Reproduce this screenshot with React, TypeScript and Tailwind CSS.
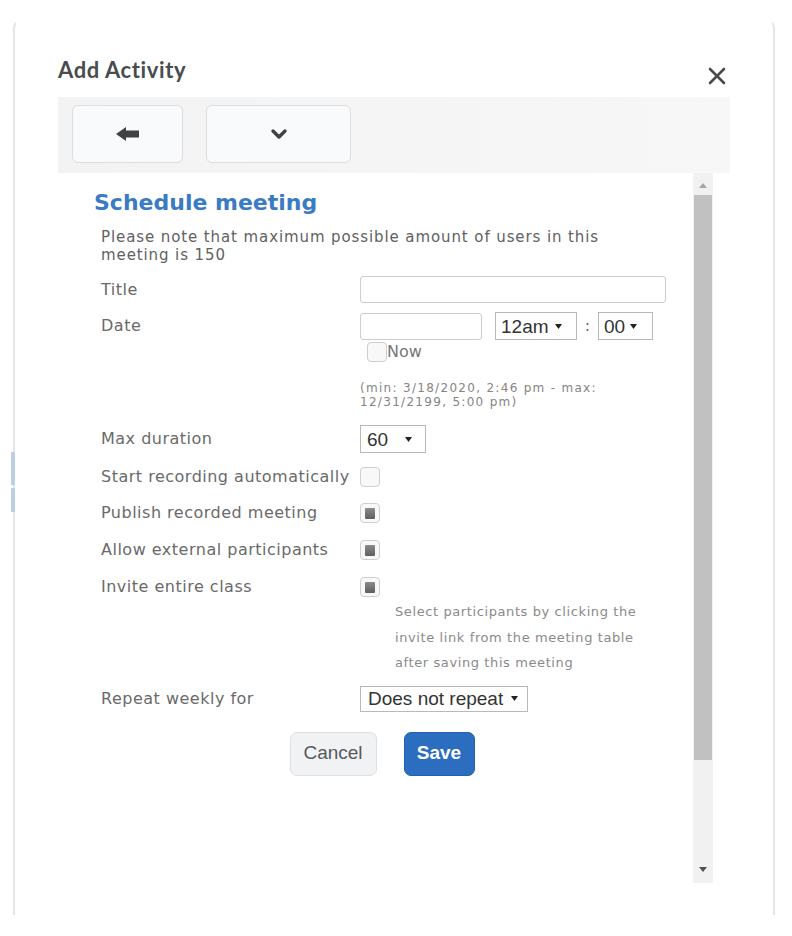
import React from "react";

function Arrow({ className = "" }: { className?: string }) {
  return (
    <svg width="7" height="5" viewBox="0 0 7 5" className={className}>
      <polygon points="0,0 7,0 3.5,5" fill="#222" />
    </svg>
  );
}

function Select({ value, className, textClass = "" }: { value: string; className: string; textClass?: string }) {
  return (
    <div
      className={`flex items-center justify-between border border-[#b9b9b9] bg-white font-['Liberation_Sans',sans-serif] text-[19px] text-[#333] ${className}`}
    >
      <span className={`leading-none ${textClass}`}>{value}</span>
      <Arrow />
    </div>
  );
}

function Checkbox({ checked = false }: { checked?: boolean }) {
  return (
    <div className="w-[20px] h-[20px] rounded-[4px] border border-[#cfcfcf] bg-[#f8f8f8] flex items-center justify-center">
      {checked && <div className="w-[10px] h-[11px] rounded-[1px] bg-linear-to-b from-[#8c8c8c] to-[#5e5e5e]" />}
    </div>
  );
}

function Row({ label, children, className = "" }: { label: string; children: React.ReactNode; className?: string }) {
  return (
    <div className={`flex items-center ${className}`}>
      <div className="w-[259px] shrink-0 text-[16px] leading-[20px] tracking-[0.5px] text-[#6a6a6a]">{label}</div>
      {children}
    </div>
  );
}

export default function App() {
  const checks = [
    { label: "Start recording automatically", checked: false, mt: "mt-[14px]" },
    { label: "Publish recorded meeting", checked: true, mt: "mt-[16px]" },
    { label: "Allow external participants", checked: true, mt: "mt-[17px]" },
    { label: "Invite entire class", checked: true, mt: "mt-[17px]" },
  ];

  return (
    <div className="relative w-[792px] h-[936px] bg-white overflow-hidden pt-[20px] pl-[13px]">
      {/* frame */}
      <div className="w-[762px] h-[895px] border-x-2 border-t-2 border-x-[#e2e5e9] border-t-transparent rounded-t-[8px] px-[43px] pt-[34px]">
        {/* header */}
        <div className="flex items-start justify-between">
          <h1 className="font-['Lato',sans-serif] font-bold text-[22px] leading-[28px] tracking-[0.6px] text-[#494c4e]">Add Activity</h1>
          <svg width="20" height="20" viewBox="0 0 20 20" className="mt-[10px] mr-[3px]">
            <path d="M3 3 L17 17 M17 3 L3 17" stroke="#4a4a4a" strokeWidth="2.6" strokeLinecap="round" />
          </svg>
        </div>

        {/* toolbar */}
        <div className="mt-[11px] h-[76px] bg-linear-to-r from-[#f3f3f3] to-[#f7f7f7] flex items-start gap-[23px] pl-[14px] pt-[8px]">
          <button className="w-[111px] h-[58px] rounded-[6px] border border-[#dadde1] bg-[#f9fafb] flex items-center justify-center">
            <svg width="23" height="14" viewBox="0 0 23 14">
              <polygon points="0,7 10,0 10,3.5 23,3.5 23,10.5 10,10.5 10,14" fill="#3f4245" />
            </svg>
          </button>
          <button className="w-[145px] h-[58px] rounded-[6px] border border-[#dadde1] bg-[#f9fafb] flex items-center justify-center">
            <svg width="18" height="12" viewBox="0 0 18 12">
              <path d="M3 3 L9 9 L15 3" stroke="#3f4245" strokeWidth="3.4" fill="none" strokeLinecap="round" strokeLinejoin="round" />
            </svg>
          </button>
        </div>

        {/* content */}
        <div className="flex h-[710px]">
          <div className="flex-1 pt-[17px] font-['DejaVu_Sans',sans-serif]">
            <h2 className="pl-[36px] text-[22px] leading-[26px] font-bold text-[#3a7bc4]">Schedule meeting</h2>

            <div className="pl-[43px]">
              <p className="mt-[13px] text-[15px] leading-[17.5px] tracking-[0.9px] text-[#616161]">
                Please note that maximum possible amount of users in this
                <br />
                meeting is 150
              </p>

              <Row label="Title" className="mt-[12px]">
                <div className="w-[306px] h-[27px] rounded-[3px] border border-[#cdcdcd] bg-white" />
              </Row>

              <Row label="Date" className="mt-[9px]">
                <div className="flex items-center">
                  <div className="w-[122px] h-[27px] rounded-[3px] border border-[#cdcdcd] bg-white" />
                  <Select value="12am" className="ml-[13px] w-[82px] h-[28px] pl-[5px] pr-[14px]" />
                  <span className="w-[21px] text-center text-[16px] text-[#666]">:</span>
                  <Select value="00" className="w-[55px] h-[28px] pl-[5px] pr-[15px]" />
                </div>
              </Row>

              <div className="mt-[1px] ml-[266px] flex items-center">
                <Checkbox />
                <span className="text-[16px] leading-[20px] text-[#777] mt-[1px]">Now</span>
              </div>

              <p className="mt-[19px] ml-[259px] text-[12px] leading-[14px] tracking-[1.3px] text-[#858585]">
                (min: 3/18/2020, 2:46 pm - max:
                <br />
                12/31/2199, 5:00 pm)
              </p>

              <Row label="Max duration" className="mt-[16px]">
                <Select value="60" className="w-[66px] h-[28px] pl-[6px] pr-[13px]" />
              </Row>

              {checks.map((c) => (
                <Row key={c.label} label={c.label} className={c.mt}>
                  <Checkbox checked={c.checked} />
                </Row>
              ))}

              <p className="mt-[2px] ml-[294px] text-[13px] leading-[25.5px] tracking-[0.6px] text-[#8a8a8a]">
                Select participants by clicking the
                <br />
                invite link from the meeting table
                <br />
                after saving this meeting
              </p>

              <Row label="Repeat weekly for" className="mt-[10px]">
                <Select value="Does not repeat" className="w-[168px] h-[26px] pl-[7px] pr-[9px]" />
              </Row>
            </div>

            <div className="mt-[20px] flex justify-center pl-[13px] gap-[27px] font-['Liberation_Sans',sans-serif]">
              <button className="w-[87px] h-[44px] rounded-[7px] border border-[#dcdfe3] bg-[#f1f2f4] text-[19px] text-[#565a5c]">
                Cancel
              </button>
              <button className="w-[71px] h-[44px] rounded-[7px] border border-[#2262b0] bg-[#2b6dbf] text-[19px] font-bold text-white">
                Save
              </button>
            </div>
          </div>

          {/* scrollbar */}
          <div className="w-[20px] mr-[17px] bg-[#f1f1f1] flex flex-col items-center">
            <svg width="8" height="5" viewBox="0 0 8 5" className="mt-[10px]">
              <polygon points="0,5 8,5 4,0" fill="#a5a5a5" />
            </svg>
            <div className="mt-[7px] w-[18px] h-[565px] bg-[#c1c1c1]" />
            <div className="flex-1" />
            <svg width="8" height="5" viewBox="0 0 8 5" className="mb-[11px]">
              <polygon points="0,0 8,0 4,5" fill="#505050" />
            </svg>
          </div>
        </div>
      </div>

      {/* blue marks on the left edge */}
      <div className="absolute left-[11px] top-[452px] w-[4px] h-[33px] bg-[#bcd0e3]" />
      <div className="absolute left-[11px] top-[488px] w-[4px] h-[24px] bg-[#bcd0e3]" />
    </div>
  );
}
